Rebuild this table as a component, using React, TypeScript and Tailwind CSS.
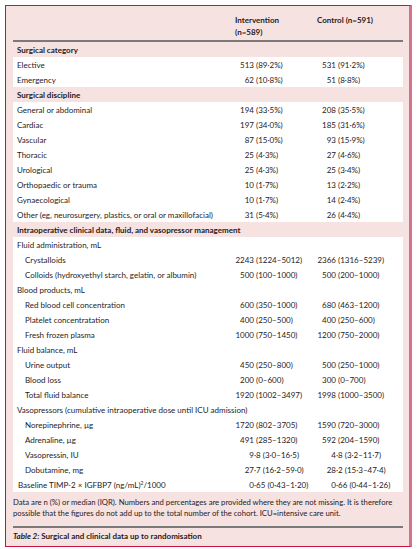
type Row = {
  label: string;
  kind?: "head" | "sub" | "plain";
  a?: string;
  b?: string;
};

const rows: Row[] = [
  { label: "Surgical category", kind: "head" },
  { label: "Elective", a: "513 (89·2%)", b: "531 (91·2%)" },
  { label: "Emergency", a: "62 (10·8%)", b: "51 (8·8%)" },
  { label: "Surgical discipline", kind: "head" },
  { label: "General or abdominal", a: "194 (33·5%)", b: "208 (35·5%)" },
  { label: "Cardiac", a: "197 (34·0%)", b: "185 (31·6%)" },
  { label: "Vascular", a: "87 (15·0%)", b: "93 (15·9%)" },
  { label: "Thoracic", a: "25 (4·3%)", b: "27 (4·6%)" },
  { label: "Urological", a: "25 (4·3%)", b: "25 (3·4%)" },
  { label: "Orthopaedic or trauma", a: "10 (1·7%)", b: "13 (2·2%)" },
  { label: "Gynaecological", a: "10 (1·7%)", b: "14 (2·4%)" },
  {
    label: "Other (eg, neurosurgery, plastics, or oral or maxillofacial)",
    a: "31 (5·4%)",
    b: "26 (4·4%)",
  },
  { label: "Intraoperative clinical data, fluid, and vasopressor management", kind: "head" },
  { label: "Fluid administration, mL" },
  { label: "Crystalloids", kind: "sub", a: "2243 (1224–5012)", b: "2366 (1316–5239)" },
  {
    label: "Colloids (hydroxyethyl starch, gelatin, or albumin)",
    kind: "sub",
    a: "500 (100–1000)",
    b: "500 (200–1000)",
  },
  { label: "Blood products, mL" },
  { label: "Red blood cell concentration", kind: "sub", a: "600 (350–1000)", b: "680 (463–1200)" },
  { label: "Platelet concentratation", kind: "sub", a: "400 (250–500)", b: "400 (250–600)" },
  { label: "Fresh frozen plasma", kind: "sub", a: "1000 (750–1450)", b: "1200 (750–2000)" },
  { label: "Fluid balance, mL" },
  { label: "Urine output", kind: "sub", a: "450 (250–800)", b: "500 (250–1000)" },
  { label: "Blood loss", kind: "sub", a: "200 (0–600)", b: "300 (0–700)" },
  { label: "Total fluid balance", kind: "sub", a: "1920 (1002–3497)", b: "1998 (1000–3500)" },
  { label: "Vasopressors (cumulative intraoperative dose until ICU admission)" },
  { label: "Norepinephrine, µg", kind: "sub", a: "1720 (802–3705)", b: "1590 (720–3000)" },
  { label: "Adrenaline, µg", kind: "sub", a: "491 (285–1320)", b: "592 (204–1590)" },
  { label: "Vasopressin, IU", kind: "sub", a: "9·8 (3·0–16·5)", b: "4·8 (3·2–11·7)" },
  { label: "Dobutamine, mg", kind: "sub", a: "27·7 (16·2–59·0)", b: "28·2 (15·3–47·4)" },
  { label: "", a: "0·65 (0·43–1·20)", b: "0·66 (0·44–1·26)" },
];

// split so the integer part lines up on its right edge
const Value = ({ v, w }: { v?: string; w: string }) => {
  if (!v) return <div className={w} />;
  const m = v.match(/^(\d+)(.*)$/);
  const int = m ? m[1] : v;
  const rest = m ? m[2] : "";
  return (
    <div className={`${w} flex whitespace-pre`}>
      <span className="w-[19px] text-right">{int}</span>
      <span>{rest}</span>
    </div>
  );
};

export default function App() {
  return (
    <div className="w-[420px] h-[549px] bg-white pt-[5px] pl-[5px] font-['Lato','Liberation_Sans',sans-serif] text-[#1f1b1c]">
      <div className="w-[407px] h-[542px] bg-[#f6e2e0] border-t border-l border-b border-[#c4163c] border-r-[3px] border-r-[#d3728b] pl-[7px] pr-[6px]">
        <div className="h-[34px] pt-[8px] flex text-[8px] leading-[12px] font-bold">
          <div className="flex-1" />
          <div className="w-[82px]">
            Intervention
            <br />
            (n=589)
          </div>
          <div className="w-[86px]">Control (n=591)</div>
        </div>
        <div className="h-[2px] bg-[#7a7a7a]" />

        <div className="text-[8px]">
          {rows.map((r, i) =>
            r.kind === "head" ? (
              <div key={i} className="h-[15px] flex items-center pl-[4px] font-bold whitespace-nowrap">
                {r.label}
              </div>
            ) : (
              <div key={i} className="h-[15px] flex items-center bg-white whitespace-nowrap">
                {r.a ? (
                  <>
                    <div className={`flex-1 ${r.kind === "sub" ? "pl-[12px]" : "pl-[4px]"}`}>
                      {r.label || (
                        <span className="pl-[1px]">
                          Baseline TIMP-2 × IGFBP7 (ng/mL)<sup className="text-[5px]">2</sup>/1000
                        </span>
                      )}
                    </div>
                    <Value v={r.a} w="w-[82px]" />
                    <Value v={r.b} w="w-[86px]" />
                  </>
                ) : (
                  <div className="pl-[4px]">{r.label}</div>
                )}
              </div>
            )
          )}
        </div>

        <p className="pt-[5px] text-[7.7px] leading-[11px] whitespace-nowrap">
          Data are n (%) or median (IQR). Numbers and percentages are provided where they are not missing. It is therefore
          <br />
          possible that the figures do not add up to the total number of the cohort. ICU=intensive care unit.
        </p>
        <div className="mt-[7px] h-[2px] bg-[#7a7a7a]" />
        <p className="pt-[3px] text-[8px] leading-[11px] font-bold">
          <span className="italic">Table 2:</span> Surgical and clinical data up to randomisation
        </p>
      </div>
    </div>
  );
}
